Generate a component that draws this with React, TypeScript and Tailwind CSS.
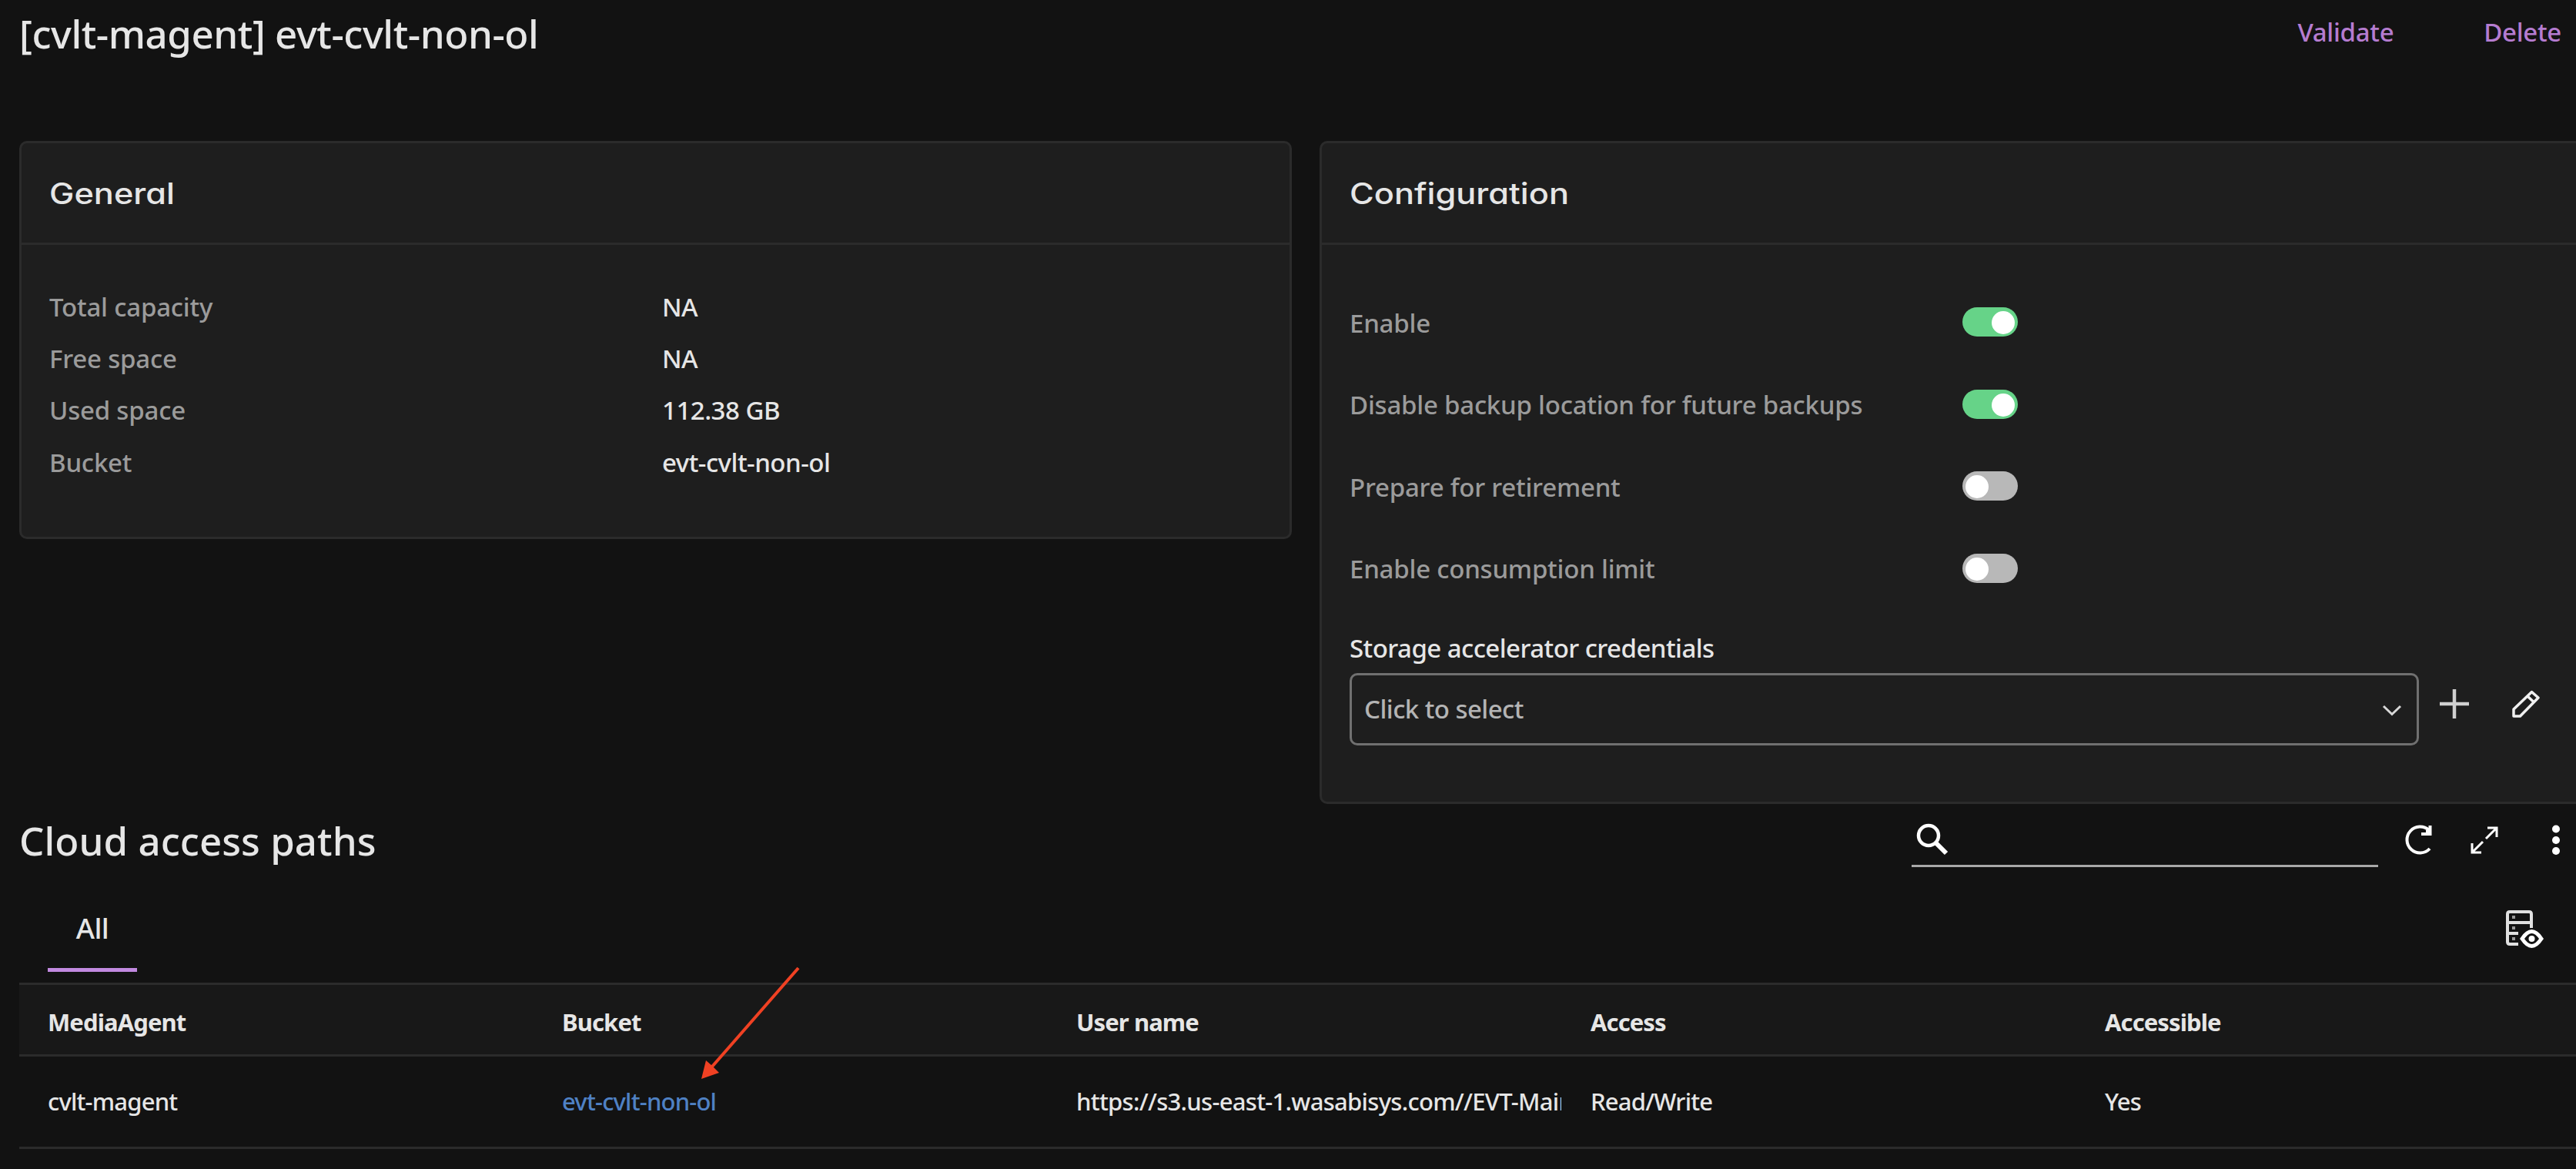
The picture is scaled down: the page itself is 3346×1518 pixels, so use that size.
import React from "react";

const toggles = [
  { label: "Enable", on: true },
  { label: "Disable backup location for future backups", on: true },
  { label: "Prepare for retirement", on: false },
  { label: "Enable consumption limit", on: false },
];

const facts = [
  ["Total capacity", "NA"],
  ["Free space", "NA"],
  ["Used space", "112.38 GB"],
  ["Bucket", "evt-cvlt-non-ol"],
];

function Toggle({ on }: { on: boolean }) {
  return (
    <span
      className={
        on
          ? "flex h-[38px] w-[72px] items-center justify-end rounded-full bg-[#66d388] px-[4px] pt-[2px]"
          : "flex h-[38px] w-[72px] items-center justify-start rounded-full bg-[#b8b8b8] px-[4px] pt-[2px]"
      }
    >
      <span className="h-[30px] w-[30px] rounded-full bg-white" />
    </span>
  );
}

function CardTitle({ children }: { children: React.ReactNode }) {
  return (
    <div className="flex h-[132px] items-center border-b-3 border-[#2b2b2b] px-[36px] pt-[1px] font-['Inter',sans-serif] text-[38px] font-medium">
      <span className="origin-left scale-x-[1.14] [font-feature-settings:'cv11']">{children}</span>
    </div>
  );
}

export default function App() {
  return (
    <div className="relative h-[1518px] w-[3346px] overflow-hidden bg-[#121212] font-['Noto_Sans',sans-serif] text-[33px] font-medium text-[#e6e6e6]">
      <header className="flex h-[183px] items-start justify-between pr-[19px] pl-[25px]">
        <h1 className="pt-[7px] text-[51px] leading-[72px] tracking-[-0.45px]">[cvlt-magent] evt-cvlt-non-ol</h1>
        <nav className="flex gap-[117px] pt-[18px] leading-[48px] tracking-[-0.3px] text-[#b57cd0]">
          <span>Validate</span>
          <span>Delete</span>
        </nav>
      </header>

      <div className="flex h-[862px] items-start gap-[36px] pl-[25px]">
        <section className="h-[517px] w-[1653px] shrink-0 rounded-[10px] border-3 border-[#2b2b2b] bg-[#1e1e1e]">
          <CardTitle>General</CardTitle>
          <dl className="px-[36px] pt-[47px]">
            {facts.map(([k, v]) => (
              <div key={k} className="flex h-[67.3px] items-center">
                <dt className="w-[796px] tracking-[-0.2px] text-[#9b9b9b]">{k}</dt>
                <dd className="tracking-[-0.5px]">{v}</dd>
              </div>
            ))}
          </dl>
        </section>

        <section className="h-[861px] w-[1700px] shrink-0 rounded-l-[10px] border-3 border-[#2b2b2b] bg-[#1e1e1e]">
          <CardTitle>Configuration</CardTitle>
          <div className="px-[36px] pt-[47px]">
            {toggles.map((t) => (
              <div key={t.label} className="flex h-[106.5px] items-center">
                <span className="w-[796px] pt-[2px] tracking-[-0.23px] text-[#9b9b9b]">{t.label}</span>
                <Toggle on={t.on} />
              </div>
            ))}
            <div className="mt-[23px] leading-[56px] tracking-[-0.55px]">Storage accelerator credentials</div>
            <div className="flex items-start">
              <div className="mt-[4px] flex h-[94px] w-[1389px] items-center justify-between rounded-[10px] border-3 border-[#707070] pr-[19px] pl-[16px] tracking-[-0.55px] text-[#b4b4b4]">
                <span>Click to select</span>
                <svg width="26" height="26" viewBox="0 0 26 26" fill="none" stroke="#d8d8d8" strokeWidth="3">
                  <path d="M2 9 L13 19.500 L24 9" />
                </svg>
              </div>
              <svg className="mt-[24px] ml-[26px]" width="40" height="40" viewBox="0 0 40 40" fill="none" stroke="#d0d0d0" strokeWidth="4.500">
                <path d="M1 20 H39 M20 1 V39" />
              </svg>
              <svg className="mt-[26px] ml-[55px]" width="36" height="36" viewBox="0 0 36 36" fill="none" stroke="#f0f0f0" strokeWidth="3.500" strokeLinejoin="round">
                <path d="M2 34 V25 L25.500 2.500 L34 10 L10.500 34 Z M20 8 L28.500 16" />
              </svg>
            </div>
          </div>
        </section>
      </div>

      <div className="flex h-[95px] items-start justify-between pl-[25px]">
        <h2 className="pt-[10px] text-[51px] leading-[72px] tracking-[0.05px]">Cloud access paths</h2>
        <div className="flex items-start">
          <div className="flex h-[81px] w-[606px] items-start border-b-3 border-[#a8a8a8] pt-[23px] pl-[5px]">
            <svg width="44" height="44" viewBox="0 0 44 44" fill="none" stroke="#fff" strokeWidth="4.500">
              <circle cx="17" cy="17" r="13" />
              <path d="M26 26 L40 40" strokeWidth="6" />
            </svg>
          </div>
          <svg className="mt-[25px] ml-[33px]" width="40" height="42" viewBox="0 0 40 42" fill="none" stroke="#fff" strokeWidth="4">
            <path d="M33 8 A17 17 0 1 0 34 32 M34.500 2 V13 H23 M29 10 H34" />
          </svg>
          <svg className="mt-[28px] ml-[47px]" width="36" height="36" viewBox="0 0 36 36" fill="none" stroke="#fff" strokeWidth="3">
            <path d="M22 2 H34 V14 M34 2 L20 16 M16 20 L2 34 M2 22 V34 H14" />
          </svg>
          <svg className="mt-[26px] ml-[68px]" width="33" height="40" viewBox="0 0 33 40" fill="#fff">
            <circle cx="7" cy="5.500" r="5" />
            <circle cx="7" cy="20" r="5" />
            <circle cx="7" cy="34" r="5" />
          </svg>
        </div>
      </div>

      <div className="flex h-[136px] items-start justify-between pt-[27px] pr-[40px] pl-[62px]">
        <div className="flex h-[95px] w-[116px] justify-center border-b-5 border-[#c189e0] pt-[13px] text-[37px] leading-[50px] tracking-[-0.5px]">
          All
        </div>
        <svg className="mt-[14px]" width="52" height="50" viewBox="0 0 52 50" fill="none" stroke="#e0e0e0" strokeWidth="4">
          <path d="M17 45 H6 Q3 45 3 42 V6 Q3 3 6 3 H31 Q34 3 34 6 V24 M3 17 H34 M3 31 H17" />
          <path d="M9 10 H13 M9 24 H13 M9 38 H13" strokeWidth="4" stroke="#999" />
          <path d="M22 38 Q34.500 19 47 38 Q34.500 57 22 38 Z" stroke="#fff" strokeWidth="5" />
          <circle cx="34.500" cy="38" r="4" fill="#fff" stroke="none" />
        </svg>
      </div>

      <div className="ml-[25px] border-t-3 border-[#2b2b2b]">
        <div className="grid h-[93px] grid-cols-[668px_668px_668px_668px_1fr] items-center border-b-3 border-[#2b2b2b] bg-[#181818] pt-[6px] pl-[37px] text-[31px] font-bold tracking-[-0.9px]">
          <span>MediaAgent</span>
          <span>Bucket</span>
          <span>User name</span>
          <span>Access</span>
          <span>Accessible</span>
        </div>
        <div className="grid h-[120px] grid-cols-[668px_668px_668px_668px_1fr] items-center border-b-3 border-[#2b2b2b] pl-[37px] text-[31px] tracking-[-0.8px]">
          <span>cvlt-magent</span>
          <span className="text-[#4f81c4]">evt-cvlt-non-ol</span>
          <span className="w-[630px] overflow-hidden whitespace-nowrap tracking-[-0.7px]">https://s3.us-east-1.wasabisys.com//EVT-Main</span>
          <span>Read/Write</span>
          <span>Yes</span>
        </div>
      </div>

      <svg className="absolute top-[1250px] left-[900px]" width="150" height="160" viewBox="0 0 150 160">
        <path d="M137 7 L25 135" stroke="#f04123" strokeWidth="4" />
        <path d="M11 151 L17 127 L25 134 L34 143 Z" fill="#f04123" />
      </svg>
    </div>
  );
}
